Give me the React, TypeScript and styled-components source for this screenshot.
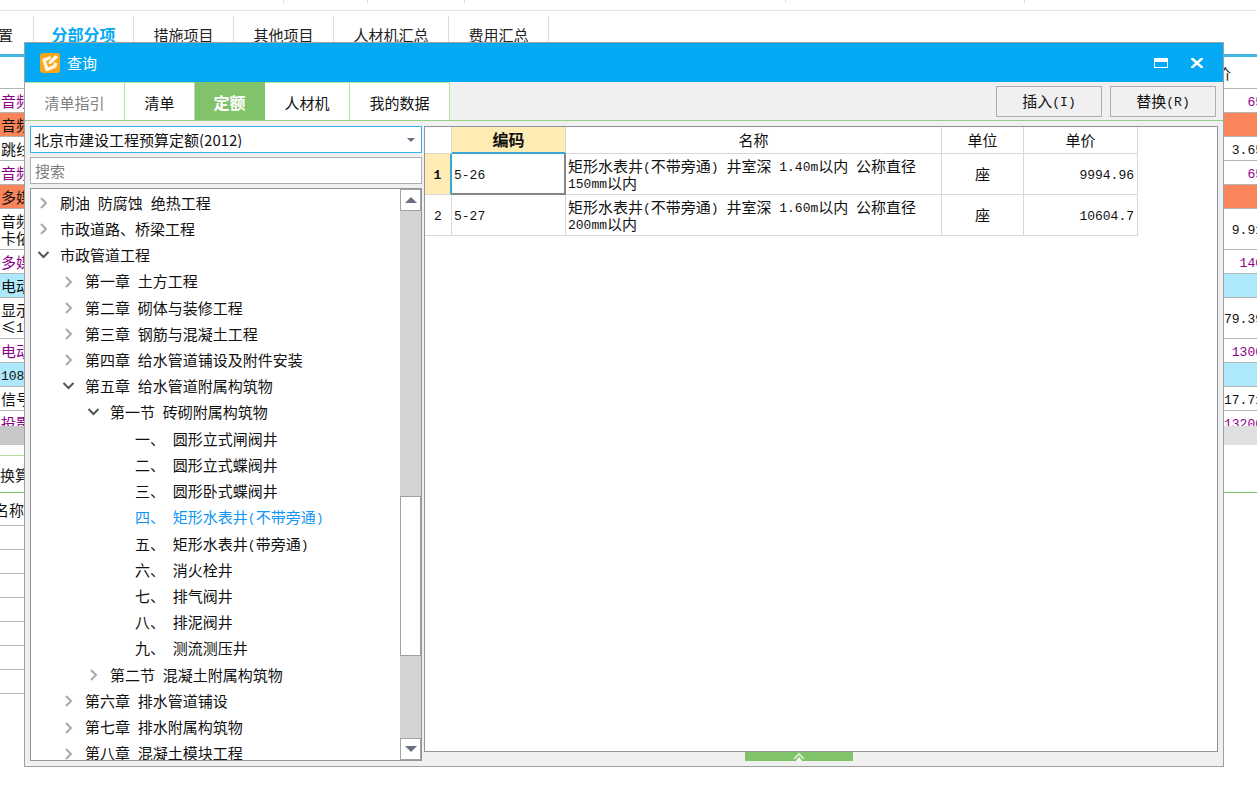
import React from "react";
import styled, { createGlobalStyle, css } from "styled-components";

const GlobalStyle = createGlobalStyle`
  *, *::before, *::after { box-sizing: border-box; }
  html, body { margin: 0; padding: 0; background: #fff; }
  body, button, input, select, table {
    font-family: "Noto Sans CJK SC", sans-serif;
    font-size: 15px;
    line-height: 17px;
    color: #111;
  }
`;

/* ---------- text ---------- */

const HalfWidth = styled.span`
  font-family: "Liberation Mono", monospace;
  font-size: 13px;
  line-height: 0;
  vertical-align: 1px;
`;

const Mixed = ({ text }: { text: string }) => (
  <>
    {text
      .split(/([\x20-\x7e]+)/)
      .filter(Boolean)
      .map((part, i) =>
        /^[\x20-\x7e]/.test(part) ? <HalfWidth key={i}>{part}</HalfWidth> : part
      )}
  </>
);

/* ---------- main window behind the dialog ---------- */

const Page = styled.div`
  position: relative;
  min-height: 100vh;
  overflow: hidden;
  background: #fff;
`;

const Ribbon = styled.div`
  display: flex;
  height: 11px;
  border-bottom: 1px solid #e2e2e2;
`;

const RibbonGroup = styled.div<{ $width: number }>`
  width: ${(p) => p.$width}px;
  height: 3px;
  border-right: 1px solid #dcdcdc;
`;

const MainTabs = styled.nav`
  display: flex;
  height: 46px;
  padding-top: 5px;
  border-bottom: 3px solid #45b4e6;
`;

const MainTab = styled.a<{ $width: number; $active?: boolean; $clipped?: boolean }>`
  display: flex;
  align-items: center;
  justify-content: ${(p) => (p.$clipped ? "flex-end" : "center")};
  width: ${(p) => p.$width}px;
  padding: 0 ${(p) => (p.$clipped ? 20 : 0)}px 2px 0;
  border-right: 1px solid #dcdcdc;
  color: #222;
  text-decoration: none;
  white-space: nowrap;
  ${(p) =>
    p.$active &&
    css`
      color: #03a9f4;
      font-size: 16px;
      font-weight: 700;
    `}
`;

const SheetView = styled.div`
  height: 369px;
  margin-right: -6px;
  overflow: hidden;
`;

const Sheet = styled.table`
  width: 100%;
  border-collapse: separate;
  border-spacing: 0;
  th, td {
    padding: 0 0 1px 1px;
    border-bottom: 1px solid #b4b4b4;
    white-space: nowrap;
    font-weight: 400;
    text-align: left;
  }
  th:last-child {
    padding-right: 32px;
    text-align: right;
  }
  td:last-child { text-align: right; }
`;

const tones = {
  plain: { bg: "#fff", fg: "#111" },
  item: { bg: "#fff", fg: "#8b008b" },
  orange: { bg: "#fa855a", fg: "#111" },
  blue: { bg: "#ade8fb", fg: "#111" },
};

type Tone = keyof typeof tones;

const SheetRow = styled.tr<{ $tone: Tone; $height: number }>`
  height: ${(p) => p.$height}px;
  background: ${(p) => tones[p.$tone].bg};
  color: ${(p) => tones[p.$tone].fg};
`;

const SheetScroll = styled.div`
  height: 19px;
  background: linear-gradient(90deg, #c8c8c8 50%, #e0e0e0 50%);
`;

const DetailTabs = styled.div`
  display: flex;
  height: 48px;
  padding-top: 10px;
  border-bottom: 1px solid #7cc46a;
`;

const DetailTab = styled.a`
  display: flex;
  align-items: center;
  width: 100px;
  border-top: 1px solid #b5e3a5;
  border-right: 1px solid #b5e3a5;
  color: #222;
  text-decoration: none;
`;

const DetailTable = styled.table`
  width: 60%;
  border-collapse: separate;
  border-spacing: 0;
  th, td {
    height: 24px;
    padding: 0;
    border-bottom: 1px solid #b8b8b8;
  }
  th {
    height: 33px;
    font-weight: 400;
    text-align: left;
  }
`;

const ClippedHead = styled.div`
  display: flex;
  justify-content: flex-end;
  width: 24px;
  white-space: nowrap;
`;

/* ---------- dialog ---------- */

const Dialog = styled.section`
  position: absolute;
  inset: 42px 33px 32px 24px;
  display: flex;
  flex-direction: column;
  border: 1px solid #a0a0a0;
  background: #f0f0f0;
`;

const TitleBar = styled.header`
  display: flex;
  flex: none;
  align-items: center;
  gap: 7px;
  height: 39px;
  padding: 0 19px 0 15px;
  background: #03a9f3;
  color: #fff;
`;

const Title = styled.h1`
  flex: 1;
  margin: 0;
  font-size: 15px;
  font-weight: 400;
`;

const WindowButton = styled.button`
  display: flex;
  align-items: center;
  justify-content: center;
  width: 14px;
  height: 20px;
  margin-left: 15px;
  padding: 0;
  border: 0;
  background: none;
  color: #fff;
`;

const TabBar = styled.div`
  display: flex;
  flex: none;
  align-items: stretch;
  height: 39px;
  border-bottom: 1px solid #97cf88;
`;

const Tab = styled.button<{ $width: number; $active?: boolean; $muted?: boolean }>`
  width: ${(p) => p.$width}px;
  padding: 1px 0 0;
  border: 0;
  border-top: 1px solid #b5e3a5;
  border-right: 1px solid #b5e3a5;
  background: #fff;
  color: ${(p) => (p.$muted ? "#808080" : "#111")};
  ${(p) =>
    p.$active &&
    css`
      background: #80c36b;
      border-color: #80c36b;
      color: #fff;
      font-size: 16px;
      font-weight: 700;
    `}
`;

const Actions = styled.div`
  display: flex;
  gap: 8px;
  align-items: center;
  margin-left: auto;
  padding-right: 7px;
`;

const ActionButton = styled.button`
  width: 106px;
  height: 31px;
  padding: 0 0 2px;
  border: 1px solid #adadad;
  background: #f0f0f0;
`;

const Body = styled.div`
  display: flex;
  flex: 1;
  gap: 2px;
  min-height: 0;
  padding: 5px;
`;

const SidePanel = styled.div`
  display: flex;
  flex: none;
  flex-direction: column;
  gap: 4px;
  width: 392px;
`;

const SelectWrap = styled.label`
  display: flex;
  align-items: center;
  height: 27px;
  padding-right: 6px;
  border: 1px solid #36b3e6;
  background: #fff;
`;

const Select = styled.select`
  flex: 1;
  height: 25px;
  padding: 0 3px;
  border: 0;
  outline: 0;
  background: none;
  appearance: none;
`;

const Search = styled.input`
  flex: none;
  width: 100%;
  height: 27px;
  padding: 0 4px;
  border: 1px solid #adadad;
  outline: 0;
  background: #fff;
  &::placeholder { color: #808080; opacity: 1; }
`;

const TreeBox = styled.div`
  display: flex;
  flex: 1;
  min-height: 0;
  overflow: hidden;
  border: 1px solid #8f969e;
  background: #fff;
`;

const TreeView = styled.div`
  flex: 1;
  overflow: hidden;
`;

const TreeList = styled.ul`
  display: grid;
  grid-auto-rows: 1fr;
  height: 578px;
  margin: 0;
  padding: 1px 0 0;
  list-style: none;
`;

const TreeRow = styled.li<{ $level: number; $selected?: boolean }>`
  display: flex;
  align-items: center;
  gap: 8px;
  padding-left: ${(p) => 4 + p.$level * 25}px;
  color: ${(p) => (p.$selected ? "#1296f5" : "#111")};
  white-space: nowrap;
`;

const TreeLabel = styled.span`
  padding-bottom: 2px;
`;

const Twisty = styled.svg`
  flex: none;
  width: 17px;
  height: 14px;
  fill: none;
  stroke-width: 2;
`;

const ScrollBar = styled.div`
  display: flex;
  flex: none;
  flex-direction: column;
  width: 21px;
  background: #d3d3d3;
`;

const ScrollButton = styled.button`
  display: flex;
  flex: none;
  align-items: center;
  justify-content: center;
  height: 22px;
  padding: 0;
  border: 1px solid #a3a3a3;
  background: #fff;
`;

const Track = styled.div<{ $share: number }>`
  flex: ${(p) => p.$share};
`;

const Thumb = styled.div`
  flex: 159;
  border: 1px solid #a0a0a0;
  background: #fff;
`;

const ResultPanel = styled.div`
  display: flex;
  flex: 1;
  flex-direction: column;
  min-width: 0;
`;

const ResultBox = styled.div`
  flex: 1;
  min-height: 0;
  border: 1px solid #8f949e;
  background: #fff;
`;

const ResultTable = styled.table`
  width: 713px;
  table-layout: fixed;
  border-collapse: separate;
  border-spacing: 0;
  th, td {
    height: 41px;
    padding: 0 2px 1px;
    border-right: 1px solid #d8d8d8;
    border-bottom: 1px solid #d8d8d8;
    font-weight: 400;
    text-align: left;
  }
  thead th { height: 27px; text-align: center; }
`;

const ActiveHead = styled.th`
  && {
    background: #ffecb5;
    border-bottom: 2px solid #3aa7d3;
    font-size: 16px;
    font-weight: 700;
  }
`;

const RowHead = styled.th<{ $active?: boolean }>`
  && {
    text-align: center;
    ${(p) =>
      p.$active &&
      css`
        background: #ffecb5;
        border-right: 2px solid #3aa7d3;
        font-weight: 700;
      `}
  }
`;

const CodeCell = styled.td<{ $active?: boolean }>`
  && {
    ${(p) =>
      p.$active &&
      css`
        border-right: 2px solid #868686;
        border-bottom: 2px solid #868686;
      `}
  }
`;

const UnitCell = styled.td`
  && { text-align: center; }
`;

const PriceCell = styled.td`
  && { padding-right: 3px; text-align: right; }
`;

const ExpandHandle = styled.button`
  display: flex;
  flex: none;
  align-items: center;
  justify-content: center;
  width: 108px;
  height: 9px;
  margin-left: 321px;
  padding: 0;
  border: 0;
  background: #80c36b;
`;

/* ---------- data ---------- */

const sheetRows: { tone: Tone; name: string[]; price: string; tall?: boolean }[] = [
  { tone: "item", name: ["音频"], price: "65" },
  { tone: "orange", name: ["音频"], price: "" },
  { tone: "plain", name: ["跳线"], price: "3.65" },
  { tone: "item", name: ["音频"], price: "65" },
  { tone: "orange", name: ["多媒"], price: "" },
  { tone: "plain", name: ["音频", "卡侬"], price: "9.91", tall: true },
  { tone: "item", name: ["多媒"], price: "140" },
  { tone: "blue", name: ["电动"], price: "" },
  { tone: "plain", name: ["显示", "≤1"], price: "79.39", tall: true },
  { tone: "item", name: ["电动"], price: "1300" },
  { tone: "blue", name: ["108"], price: "" },
  { tone: "plain", name: ["信号"], price: "17.71" },
  { tone: "item", name: ["投影"], price: "13200" },
];

type Node = { level: number; text: string; state?: "open" | "closed"; selected?: boolean };

const tree: Node[] = [
  { level: 0, text: "刷油 防腐蚀 绝热工程", state: "closed" },
  { level: 0, text: "市政道路、桥梁工程", state: "closed" },
  { level: 0, text: "市政管道工程", state: "open" },
  { level: 1, text: "第一章 土方工程", state: "closed" },
  { level: 1, text: "第二章 砌体与装修工程", state: "closed" },
  { level: 1, text: "第三章 钢筋与混凝土工程", state: "closed" },
  { level: 1, text: "第四章 给水管道铺设及附件安装", state: "closed" },
  { level: 1, text: "第五章 给水管道附属构筑物", state: "open" },
  { level: 2, text: "第一节 砖砌附属构筑物", state: "open" },
  { level: 3, text: "一、 圆形立式闸阀井" },
  { level: 3, text: "二、 圆形立式蝶阀井" },
  { level: 3, text: "三、 圆形卧式蝶阀井" },
  { level: 3, text: "四、 矩形水表井(不带旁通)", selected: true },
  { level: 3, text: "五、 矩形水表井(带旁通)" },
  { level: 3, text: "六、 消火栓井" },
  { level: 3, text: "七、 排气阀井" },
  { level: 3, text: "八、 排泥阀井" },
  { level: 3, text: "九、 测流测压井" },
  { level: 2, text: "第二节 混凝土附属构筑物", state: "closed" },
  { level: 1, text: "第六章 排水管道铺设", state: "closed" },
  { level: 1, text: "第七章 排水附属构筑物", state: "closed" },
  { level: 1, text: "第八章 混凝土模块工程", state: "closed" },
];

const results = [
  { code: "5-26", name: "矩形水表井(不带旁通) 井室深 1.40m以内 公称直径150mm以内", unit: "座", price: "9994.96" },
  { code: "5-27", name: "矩形水表井(不带旁通) 井室深 1.60m以内 公称直径200mm以内", unit: "座", price: "10604.7" },
];

/* ---------- icons ---------- */

const AppIcon = () => (
  <svg width="20" height="20" viewBox="0 0 20 20" aria-hidden="true">
    <rect width="20" height="20" rx="3" fill="#f9a51a" />
    <path
      d="M9.500 5 L4 7 L7 16.500 L14.500 13.500 L15.500 11"
      fill="none"
      stroke="#fff6e4"
      strokeWidth="3.400"
      strokeLinejoin="round"
      strokeLinecap="round"
    />
    <path d="M9 10.500 L16.500 3.500" stroke="#f9a51a" strokeWidth="5" />
    <path d="M8.500 11 L9.300 8.300 L15.500 2 L18 4.300 L11.500 10.500 Z" fill="#fff" />
  </svg>
);

const Arrow = ({ up, size = 12 }: { up?: boolean; size?: number }) => (
  <svg width={size} height={size / 2} viewBox="0 0 12 6" aria-hidden="true">
    <path d={up ? "M0 6 L6 0 L12 6 Z" : "M0 0 L12 0 L6 6 Z"} fill="#6b7080" />
  </svg>
);

const NodeMark = ({ state }: { state?: "open" | "closed" }) => (
  <Twisty viewBox="0 0 17 14" aria-hidden="true">
    {state === "closed" && <path d="M6 2 L11 7 L6 12" stroke="#a9a9a9" />}
    {state === "open" && <path d="M3.500 3 L8.500 8 L13.500 3" stroke="#555" />}
  </Twisty>
);

export default function App() {
  return (
    <>
      <GlobalStyle />
      <Page>
        <Ribbon>
          {[284, 84, 97, 321, 239].map((w) => (
            <RibbonGroup key={w} $width={w} />
          ))}
        </Ribbon>
        <MainTabs>
          <MainTab href="#settings" $width={34} $clipped>置</MainTab>
          <MainTab href="#parts" $width={100} $active>分部分项</MainTab>
          <MainTab href="#measures" $width={100}>措施项目</MainTab>
          <MainTab href="#others" $width={100}>其他项目</MainTab>
          <MainTab href="#materials" $width={115}>人材机汇总</MainTab>
          <MainTab href="#fees" $width={100}>费用汇总</MainTab>
        </MainTabs>
        <SheetView>
          <Sheet>
            <thead>
              <SheetRow $tone="plain" $height={32}>
                <th />
                <th>单价</th>
              </SheetRow>
            </thead>
            <tbody>
              {sheetRows.map((row, i) => (
                <SheetRow key={i} $tone={row.tone} $height={row.tall ? 41 : 24}>
                  <td>
                    {row.name.map((line) => (
                      <div key={line}>
                        <Mixed text={line} />
                      </div>
                    ))}
                  </td>
                  <td>
                    <Mixed text={row.price} />
                  </td>
                </SheetRow>
              ))}
            </tbody>
          </Sheet>
        </SheetView>
        <SheetScroll />
        <DetailTabs>
          <DetailTab href="#convert">换算</DetailTab>
        </DetailTabs>
        <DetailTable>
          <thead>
            <tr>
              <th>
                <ClippedHead>名称</ClippedHead>
              </th>
            </tr>
          </thead>
          <tbody>
            {Array.from({ length: 7 }, (_, i) => (
              <tr key={i}>
                <td />
              </tr>
            ))}
          </tbody>
        </DetailTable>

        <Dialog role="dialog" aria-labelledby="dialog-title">
          <TitleBar>
            <AppIcon />
            <Title id="dialog-title">查询</Title>
            <WindowButton aria-label="最大化">
              <svg width="14" height="10" viewBox="0 0 14 10">
                <path d="M0 0 H14 V10 H0 Z M1 4 V9 H13 V4 Z" fill="currentColor" fillRule="evenodd" />
              </svg>
            </WindowButton>
            <WindowButton aria-label="关闭">
              <svg width="14" height="10" viewBox="0 0 14 10">
                <path d="M1.500 0 L12.500 10 M12.500 0 L1.500 10" stroke="currentColor" strokeWidth="2.500" />
              </svg>
            </WindowButton>
          </TitleBar>
          <TabBar>
            <Tab $width={100} $muted>清单指引</Tab>
            <Tab $width={70}>清单</Tab>
            <Tab $width={70} $active>定额</Tab>
            <Tab $width={85}>人材机</Tab>
            <Tab $width={100}>我的数据</Tab>
            <Actions>
              <ActionButton><Mixed text="插入(I)" /></ActionButton>
              <ActionButton><Mixed text="替换(R)" /></ActionButton>
            </Actions>
          </TabBar>
          <Body>
            <SidePanel>
              <SelectWrap>
                <Select aria-label="定额库">
                  <option>北京市建设工程预算定额(2012)</option>
                </Select>
                <Arrow size={8} />
              </SelectWrap>
              <Search aria-label="搜索" placeholder="搜索" />
              <TreeBox>
                <TreeView>
                  <TreeList role="tree">
                    {tree.map((node) => (
                      <TreeRow
                        key={node.text}
                        role="treeitem"
                        $level={node.level}
                        $selected={node.selected}
                      >
                        <NodeMark state={node.state} />
                        <TreeLabel>
                          <Mixed text={node.text} />
                        </TreeLabel>
                      </TreeRow>
                    ))}
                  </TreeList>
                </TreeView>
                <ScrollBar>
                  <ScrollButton aria-label="向上滚动"><Arrow up /></ScrollButton>
                  <Track $share={287} />
                  <Thumb />
                  <Track $share={82} />
                  <ScrollButton aria-label="向下滚动"><Arrow /></ScrollButton>
                </ScrollBar>
              </TreeBox>
            </SidePanel>
            <ResultPanel>
              <ResultBox>
                <ResultTable>
                  <colgroup>
                    <col width="27" />
                    <col width="114" />
                    <col width="376" />
                    <col width="82" />
                    <col width="114" />
                  </colgroup>
                  <thead>
                    <tr>
                      <th />
                      <ActiveHead>编码</ActiveHead>
                      <th>名称</th>
                      <th>单位</th>
                      <th>单价</th>
                    </tr>
                  </thead>
                  <tbody>
                    {results.map((row, i) => (
                      <tr key={row.code}>
                        <RowHead $active={i === 0}><Mixed text={String(i + 1)} /></RowHead>
                        <CodeCell $active={i === 0}><Mixed text={row.code} /></CodeCell>
                        <td><Mixed text={row.name} /></td>
                        <UnitCell>{row.unit}</UnitCell>
                        <PriceCell><Mixed text={row.price} /></PriceCell>
                      </tr>
                    ))}
                  </tbody>
                </ResultTable>
              </ResultBox>
              <ExpandHandle aria-label="展开">
                <svg width="12" height="9" viewBox="0 0 12 9" aria-hidden="true">
                  <path d="M1 7 L6 2 L11 7" fill="none" stroke="#cdeac3" strokeWidth="2" />
                  <path d="M3 9 L6 5 L9 9 Z" fill="#fff" />
                </svg>
              </ExpandHandle>
            </ResultPanel>
          </Body>
        </Dialog>
      </Page>
    </>
  );
}
